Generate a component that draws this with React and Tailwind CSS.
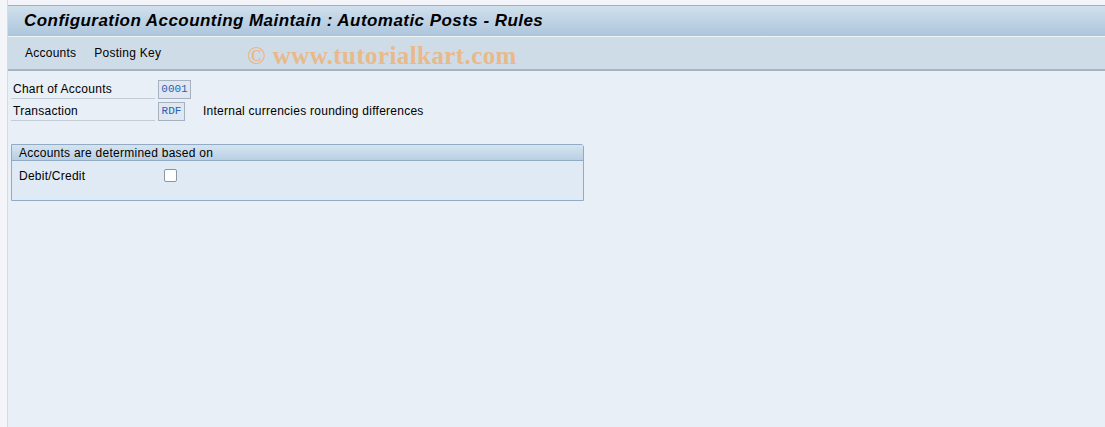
export default function App() {
  const f = { fontFamily: '"Liberation Sans", Arial, sans-serif' };
  const mono = { fontFamily: '"Liberation Mono", "Courier New", monospace' };
  return (
    <div className="w-[1105px] h-[427px] flex bg-[#e8eff7] overflow-hidden text-[12px] tracking-[0.25px] text-[#000]" style={f}>
      <div className="w-[8px] h-full bg-[#f3f5f9] border-r border-[#d5dbe4] shrink-0" />
      <div className="flex-1 flex flex-col">
        <div className="h-[6px] bg-[#f2f4f9] border-b border-[#a3afbf]" />
        <div className="h-[30px] bg-gradient-to-b from-[#d0e0ed] to-[#adc5dc] flex items-center pl-[16px]">
          <span className="font-bold italic text-[17px] tracking-[0.45px] text-[#000]">Configuration Accounting Maintain : Automatic Posts - Rules</span>
        </div>
        <div className="h-[1px] bg-[#eef3f8]" />
        <div className="h-[32px] bg-[#cedce8] flex items-center pl-[17px] relative">
          <span className="mr-[18px]">Accounts</span>
          <span>Posting Key</span>
          <span className="absolute left-[239px] top-[0px] text-[25px] tracking-[0.4px] font-bold text-[#e9b98a]" style={{ fontFamily: '"Liberation Serif", "Times New Roman", serif' }}>© www.tutorialkart.com</span>
        </div>
        <div className="h-[2px] bg-[#a7b5c3]" />
        <div className="flex flex-col pl-[3px] pt-[8px]">
          <div className="flex items-start h-[22px]">
            <div className="w-[144px] h-[20px] flex items-center pl-[2px] border-b border-[#c3cdd8]">Chart of Accounts</div>
            <div className="ml-[3px] mt-[1px] w-[33px] h-[19px] border border-[#a5b1be] bg-[#dfe8f2] flex items-center justify-center text-[11px] tracking-normal text-[#2a5fb5]" style={mono}>0001</div>
          </div>
          <div className="flex items-start h-[22px]">
            <div className="w-[144px] h-[20px] flex items-center pl-[2px] border-b border-[#c3cdd8]">Transaction</div>
            <div className="ml-[3px] mt-[1px] w-[27px] h-[19px] border border-[#a5b1be] bg-[#dfe8f2] flex items-center justify-center text-[11px] tracking-normal text-[#2a5fb5]" style={mono}>RDF</div>
            <span className="ml-[18px] h-[20px] flex items-center">Internal currencies rounding differences</span>
          </div>
          <div className="mt-[21px] w-[573px] border border-[#92abc4] bg-[#dfeaf4] rounded-tr-[3px]">
            <div className="h-[16px] bg-gradient-to-b from-[#d6e4f0] to-[#b9cfe4] border-b border-[#92abc4] flex items-center pl-[7px]">Accounts are determined based on</div>
            <div className="h-[39px] flex items-start pt-[6px] pl-[7px]">
              <span className="w-[145px]">Debit/Credit</span>
              <div className="mt-[2px] w-[13px] h-[13px] border border-[#8a96a3] bg-white rounded-[2px]" />
            </div>
          </div>
        </div>
      </div>
    </div>
  );
}
